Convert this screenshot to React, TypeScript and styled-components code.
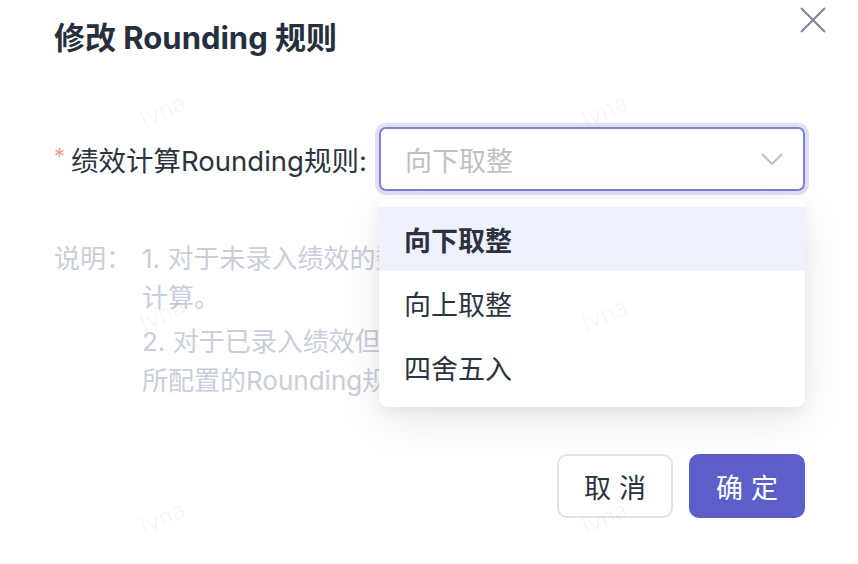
import React from 'react';
import styled, { createGlobalStyle } from 'styled-components';

const GlobalStyle = createGlobalStyle`
  html, body {
    margin: 0;
    padding: 0;
    background: #ffffff;
  }
  body {
    font-family: Inter, "Noto Sans CJK SC", sans-serif;
    -webkit-font-smoothing: antialiased;
  }
`

const Dialog = styled.div`
  position: relative;
  width: 858px;
  height: 564px;
  box-sizing: border-box;
  padding: 0 53px 0 54px;
  background: #ffffff;
  overflow: hidden;
`

const Header = styled.div`
  display: flex;
  justify-content: space-between;
  align-items: flex-start;
  margin-right: -21px;
  height: 127px;
`

const Title = styled.h2`
  margin: 18px 0 0;
  font-size: 31px;
  line-height: 40px;
  font-weight: 700;
  color: #262f3d;
`

const CloseButton = styled.button`
  margin-top: 7px;
  width: 26px;
  height: 26px;
  padding: 0;
  border: none;
  background: none;
  cursor: pointer;
  display: flex;
`

const FormRow = styled.div`
  display: flex;
  align-items: center;
  height: 64px;
`

const Label = styled.label`
  display: flex;
  align-items: center;
  flex-shrink: 0;
  width: 325px;
  font-size: 27.5px;
  color: #2b3340;
  white-space: nowrap;
`

const Required = styled.span`
  color: #f2a093;
  font-size: 22px;
  width: 17px;
  margin-top: -6px;
`

const SelectWrap = styled.div`
  position: relative;
  flex: 1;
  height: 100%;
`

const SelectBox = styled.div`
  display: flex;
  align-items: center;
  justify-content: space-between;
  height: 100%;
  box-sizing: border-box;
  padding: 0 20px 0 24px;
  border: 2px solid #7c80d8;
  border-radius: 7px;
  box-shadow: 0 0 0 4px #dfdff6;
  background: #ffffff;
`

const Placeholder = styled.span`
  font-size: 27px;
  color: #c0c0c0;
`

const Menu = styled.ul`
  position: absolute;
  left: 0;
  right: 0;
  top: 72px;
  margin: 0;
  padding: 8px 0;
  list-style: none;
  background: #ffffff;
  border-radius: 8px;
  box-shadow: 0 14px 48px rgba(0, 0, 0, 0.09), 0 4px 14px rgba(0, 0, 0, 0.05);
  z-index: 2;
`

const Option = styled.li<{ $active?: boolean }>`
  height: 64px;
  display: flex;
  align-items: center;
  padding-left: 25px;
  font-size: 27px;
  color: #2b3240;
  font-weight: ${p => (p.$active ? 700 : 400)};
  background: ${p => (p.$active ? '#eff1fd' : 'transparent')};
`

const Notes = styled.div`
  display: flex;
  margin-top: 48px;
  font-size: 26px;
  color: #c9cedb;
  height: 173px;
`

const NotesTitle = styled.div`
  width: 88px;
  flex-shrink: 0;
  line-height: 39px;
`

const NotesBody = styled.div`
  flex: 1;
  overflow: hidden;
`

const NoteItem = styled.p`
  margin: 0 0 5px;
  line-height: 39px;
`

const NoteLine = styled.span`
  display: block;
  white-space: nowrap;
`

const Footer = styled.div`
  display: flex;
  justify-content: flex-end;
  gap: 16px;
  margin-top: 42px;
`

const Button = styled.button<{ $primary?: boolean }>`
  width: 116px;
  height: 64px;
  box-sizing: border-box;
  border-radius: 10px;
  font-family: inherit;
  font-size: 27px;
  letter-spacing: 8px;
  padding: 0 0 0 8px;
  cursor: pointer;
  border: 2px solid ${p => (p.$primary ? '#5b5fc7' : '#e1e2e9')};
  background: ${p => (p.$primary ? '#5b5fc7' : '#ffffff')};
  color: ${p => (p.$primary ? '#ffffff' : '#2b3240')};
`

const Watermark = styled.span<{ $x: number; $y: number }>`
  position: absolute;
  left: ${p => p.$x}px;
  top: ${p => p.$y}px;
  font-size: 24px;
  color: rgba(0, 0, 0, 0.05);
  transform: rotate(-24deg);
  pointer-events: none;
  z-index: 5;
`

const marks = [
  [139, 96], [581, 96],
  [139, 300], [581, 300],
  [139, 503], [581, 503],
];

const App: React.FC = () => {
  return (
    <>
      <GlobalStyle />
      <Dialog>
        <Header>
          <Title>修改 Rounding 规则</Title>
          <CloseButton aria-label="关闭">
            <svg width="26" height="26" viewBox="0 0 26 26">
              <path d="M1 1 L25 25 M25 1 L1 25" stroke="#7b8196" strokeWidth="2" fill="none" />
            </svg>
          </CloseButton>
        </Header>

        <FormRow>
          <Label>
            <Required>*</Required>
            绩效计算Rounding规则:
          </Label>
          <SelectWrap>
            <SelectBox>
              <Placeholder>向下取整</Placeholder>
              <svg width="22" height="12" viewBox="0 0 22 12">
                <path d="M1 1 L11 11 L21 1" stroke="#b6bdd0" strokeWidth="2" fill="none" />
              </svg>
            </SelectBox>
            <Menu>
              <Option $active>向下取整</Option>
              <Option>向上取整</Option>
              <Option>四舍五入</Option>
            </Menu>
          </SelectWrap>
        </FormRow>

        <Notes>
          <NotesTitle>说明：</NotesTitle>
          <NotesBody>
            <NoteItem>
              <NoteLine>1. 对于未录入绩效的数据，系统将按默认规则进行</NoteLine>
              <NoteLine>计算。</NoteLine>
            </NoteItem>
            <NoteItem>
              <NoteLine>2. 对于已录入绩效但未计算的数据，将按照</NoteLine>
              <NoteLine>所配置的Rounding规则重新计算。</NoteLine>
            </NoteItem>
          </NotesBody>
        </Notes>

        <Footer>
          <Button>取消</Button>
          <Button $primary>确定</Button>
        </Footer>

        {marks.map(([x, y], i) => (
          <Watermark key={i} $x={x} $y={y}>lvna</Watermark>
        ))}
      </Dialog>
    </>
  );
}

export default App;
